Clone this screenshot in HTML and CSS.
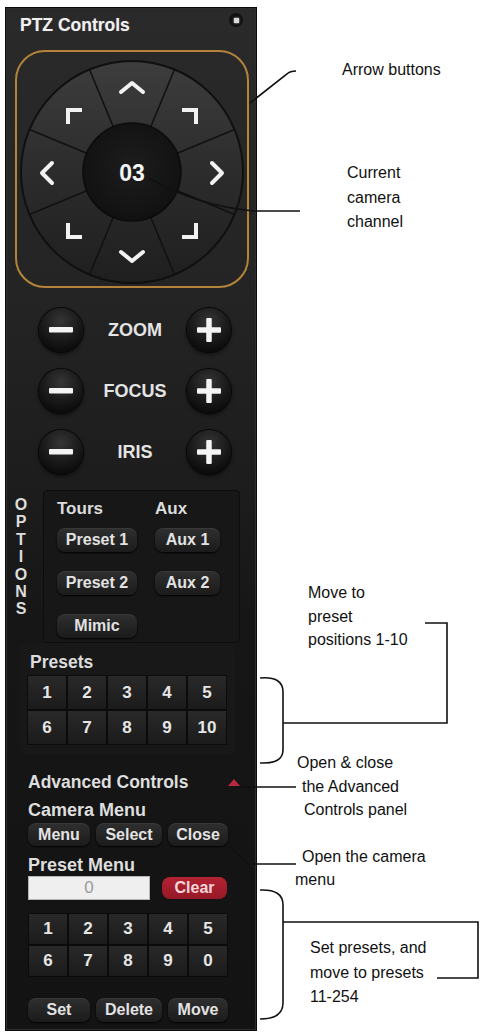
FILE: index.html
```html
<!DOCTYPE html>
<html>
<head>
<meta charset="utf-8">
<link rel="stylesheet" href="styles.css">
</head>
<body>
<div class="page">
  <div class="panel">
    <div class="hdr">
      <span class="title">PTZ Controls</span>
      <span class="xbtn"><span class="xdot"></span></span>
    </div>

    <div class="joy">
      <svg width="230" height="234" viewBox="0 0 230 234">
        <defs>
          <linearGradient id="ring" x1="0" y1="0" x2="0" y2="1">
            <stop offset="0" stop-color="#3d3d3d"/>
            <stop offset="0.5" stop-color="#2c2c2c"/>
            <stop offset="1" stop-color="#1f1f1f"/>
          </linearGradient>
          <radialGradient id="hub" cx="0.5" cy="0.45" r="0.55">
            <stop offset="0" stop-color="#1d1d1d"/>
            <stop offset="1" stop-color="#111"/>
          </radialGradient>
        </defs>
        <circle cx="115" cy="120" r="111" fill="url(#ring)" stroke="#101010" stroke-width="2"/>
        <g stroke="#111" stroke-width="1.6">
          <line x1="133.75" y1="74.73" x2="157.48" y2="17.45"/>
          <line x1="160.27" y1="101.25" x2="217.55" y2="77.52"/>
          <line x1="160.27" y1="138.75" x2="217.55" y2="162.48"/>
          <line x1="133.75" y1="165.27" x2="157.48" y2="222.55"/>
          <line x1="96.25" y1="165.27" x2="72.52" y2="222.55"/>
          <line x1="69.73" y1="138.75" x2="12.45" y2="162.48"/>
          <line x1="69.73" y1="101.25" x2="12.45" y2="77.52"/>
          <line x1="96.25" y1="74.73" x2="72.52" y2="17.45"/>
        </g>
        <circle cx="115" cy="120" r="49" fill="url(#hub)" stroke="#0c0c0c" stroke-width="1.5"/>
        <g fill="none" stroke="#f2f2f2" stroke-width="4" stroke-linecap="round" stroke-linejoin="round">
          <polyline points="104,40 115,31 126,40"/>
          <polyline points="104,200 115,209 126,200"/>
          <polyline points="35,111 25,121 35,131"/>
          <polyline points="195,111 205,121 195,131"/>
        </g>
        <g fill="none" stroke="#f2f2f2" stroke-width="4" stroke-linecap="square">
          <polyline points="51,70 51,58 63,58"/>
          <polyline points="167,58 179,58 179,70"/>
          <polyline points="51,173 51,185 63,185"/>
          <polyline points="167,185 179,185 179,173"/>
        </g>
        <text x="115" y="129" text-anchor="middle" class="chan">03</text>
      </svg>
    </div>

    <div class="lens">
      <div class="lrow">
        <span class="rnd"><svg width="24" height="6"><rect width="24" height="5.5" y="0" rx="1" fill="#f4f4f4"/></svg></span>
        <span class="llabel">ZOOM</span>
        <span class="rnd"><svg width="24" height="24"><rect x="0" y="9.25" width="24" height="5.5" rx="1" fill="#f4f4f4"/><rect x="9.25" y="0" width="5.5" height="24" rx="1" fill="#f4f4f4"/></svg></span>
      </div>
      <div class="lrow">
        <span class="rnd"><svg width="24" height="6"><rect width="24" height="5.5" y="0" rx="1" fill="#f4f4f4"/></svg></span>
        <span class="llabel">FOCUS</span>
        <span class="rnd"><svg width="24" height="24"><rect x="0" y="9.25" width="24" height="5.5" rx="1" fill="#f4f4f4"/><rect x="9.25" y="0" width="5.5" height="24" rx="1" fill="#f4f4f4"/></svg></span>
      </div>
      <div class="lrow">
        <span class="rnd"><svg width="24" height="6"><rect width="24" height="5.5" y="0" rx="1" fill="#f4f4f4"/></svg></span>
        <span class="llabel">IRIS</span>
        <span class="rnd"><svg width="24" height="24"><rect x="0" y="9.25" width="24" height="5.5" rx="1" fill="#f4f4f4"/><rect x="9.25" y="0" width="5.5" height="24" rx="1" fill="#f4f4f4"/></svg></span>
      </div>
    </div>

    <div class="options">
      <div class="otab">
        <span>O</span><span>P</span><span>T</span><span>I</span><span>O</span><span>N</span><span>S</span>
      </div>
      <div class="obox">
        <div class="ocol ocol1">
          <span class="olabel">Tours</span>
          <span class="btn">Preset 1</span>
          <span class="btn">Preset 2</span>
          <span class="btn">Mimic</span>
        </div>
        <div class="ocol ocol2">
          <span class="olabel">Aux</span>
          <span class="btn">Aux 1</span>
          <span class="btn">Aux 2</span>
        </div>
      </div>
    </div>

    <div class="presets">
      <div class="plabel">Presets</div>
      <div class="keys keys1">
        <span>1</span><span>2</span><span>3</span><span>4</span><span>5</span>
        <span>6</span><span>7</span><span>8</span><span>9</span><span>10</span>
      </div>
    </div>

    <div class="adv">
      <div class="advhdr"><span>Advanced Controls</span><span class="tri"></span></div>
      <div class="sublabel">Camera Menu</div>
      <div class="row3">
        <span class="btn">Menu</span><span class="btn">Select</span><span class="btn">Close</span>
      </div>
      <div class="sublabel sub2">Preset Menu</div>
      <div class="inrow">
        <span class="input">0</span>
        <span class="clear">Clear</span>
      </div>
      <div class="keys keys2">
        <span>1</span><span>2</span><span>3</span><span>4</span><span>5</span>
        <span>6</span><span>7</span><span>8</span><span>9</span><span>0</span>
      </div>
      <div class="row3 row3b">
        <span class="btn">Set</span><span class="btn">Delete</span><span class="btn">Move</span>
      </div>
    </div>
  </div>

  <svg class="wires" width="482" height="1034" viewBox="0 0 482 1034">
    <g fill="none" stroke="#111" stroke-width="1.6">
      <path d="M250 103 L287 74 Q290 71 296 71"/>
      <path d="M149 178 Q195 205 253 211 L300 211"/>
      <path d="M260 678 Q283 676 283 692 L283 750 Q283 764 260 763"/>
      <path d="M283 723 H447 V623 H425"/>
      <path d="M236 787 H296"/>
      <path d="M229 846 L248 864 H296"/>
      <path d="M260 890 Q283 889 283 905 L283 1003 Q283 1019 260 1019"/>
      <path d="M283 922 H478 V978 H437"/>
    </g>
  </svg>

  <div class="note n1">Arrow buttons</div>
  <div class="note n2">Current<br>camera<br>channel</div>
  <div class="note n3">Move to<br>preset<br>positions 1-10</div>
  <div class="note n4">Open &amp; close<br><span class="ind1">the Advanced</span><br><span class="ind2">Controls panel</span></div>
  <div class="note n5"><span class="ind1">Open the camera</span><br>menu</div>
  <div class="note n6">Set presets, and<br>move to presets<br>11-254</div>
</div>
</body>
</html>
```

FILE: styles.css
```css
html, body {
  margin: 0;
  background: #fff;
}
body {
  font-family: "Liberation Sans", Arial, sans-serif;
}
.page {
  position: relative;
  width: 482px;
  height: 1034px;
  box-sizing: border-box;
  padding: 7px 0 0 5px;
}
.panel {
  width: 252px;
  height: 1024px;
  box-sizing: border-box;
  border: 1px solid #0a0a0a;
  box-shadow: inset 0 0 0 1px #2e2e2e;
  background: linear-gradient(#2a2a2a 0%, #242424 28%, #1d1d1d 46%, #161616 60%, #131313 100%);
  display: flex;
  flex-direction: column;
  font-weight: bold;
  color: #e6e6e6;
}

/* header */
.hdr {
  height: 42px;
  box-sizing: border-box;
  padding: 7px 13px 0 14px;
  display: flex;
  justify-content: space-between;
  align-items: flex-start;
}
.title {
  font-size: 17.5px;
  line-height: 20px;
  color: #f0f0f0;
  text-shadow: 0 0 1px rgba(255,255,255,.3);
}
.xbtn {
  width: 14px;
  height: 14px;
  margin-top: -2px;
  border-radius: 50%;
  background: #111;
  display: flex;
  align-items: center;
  justify-content: center;
}
.xdot {
  width: 5px;
  height: 5px;
  background: #d8d8d8;
  box-shadow: 0 0 2px #fff;
}

/* joystick */
.joy {
  margin-left: 9px;
  width: 234px;
  height: 238px;
  box-sizing: border-box;
  border: 2px solid #b3843a;
  border-radius: 30px;
}
.joy svg {
  display: block;
}
.chan {
  font-family: "Liberation Sans", Arial, sans-serif;
  font-weight: bold;
  font-size: 23px;
  fill: #f4f4f4;
}

/* zoom / focus / iris */
.lens {
  margin: 20px 25px 0 33px;
  display: flex;
  flex-direction: column;
  gap: 17px;
}
.lrow {
  height: 44px;
  display: flex;
  align-items: center;
  justify-content: space-between;
}
.llabel {
  font-size: 18px;
  color: #e4e4e4;
}
.rnd {
  width: 44px;
  height: 44px;
  border-radius: 50%;
  background: radial-gradient(circle at 50% 30%, #363636 0%, #1c1c1c 45%, #0b0b0b 80%);
  box-shadow: 0 0 0 1px #080808, 0 2px 4px rgba(0,0,0,.7);
  display: flex;
  align-items: center;
  justify-content: center;
}
.rnd svg {
  display: block;
}

/* options */
.options {
  margin: 16px 16px 0 7px;
  height: 153px;
  display: flex;
}
.otab {
  width: 30px;
  box-sizing: border-box;
  padding: 6px 14px 0 0;
  display: flex;
  flex-direction: column;
  align-items: center;
  font-size: 16px;
  line-height: 17.4px;
  color: #dcdcdc;
}
.obox {
  flex: 1;
  background: #171717;
  border: 1px solid #0d0d0d;
  border-radius: 4px;
  padding: 8px 0 0 13px;
  display: flex;
  gap: 18px;
}
.ocol {
  display: flex;
  flex-direction: column;
  gap: 19px;
}
.ocol1 { width: 80px; }
.ocol2 { width: 65px; }
.olabel {
  font-size: 17px;
  line-height: 20px;
  margin-bottom: -10px;
  color: #dcdcdc;
}
.btn {
  height: 24px;
  border-radius: 8px;
  background: linear-gradient(#2f2f2f, #1b1b1b);
  box-shadow: 0 1px 2px #000, inset 0 1px 0 rgba(255,255,255,.05);
  display: flex;
  align-items: center;
  justify-content: center;
  font-size: 16px;
  color: #e2e2e2;
}

/* presets */
.presets {
  margin: 0 21px 0 14px;
  height: 112px;
  box-sizing: border-box;
  padding: 10px 0 0 7px;
  background: #181818;
  border-radius: 6px;
}
.plabel {
  font-size: 17.5px;
  line-height: 18px;
  padding-left: 3px;
  margin-bottom: 4px;
  color: #dcdcdc;
}
.keys {
  display: grid;
  grid-template-columns: repeat(5, 40px);
}
.keys span {
  box-sizing: border-box;
  border: 1px solid #0b0b0b;
  background: linear-gradient(#292929, #1b1b1b);
  display: flex;
  align-items: center;
  justify-content: center;
  font-size: 17px;
  color: #e6e6e6;
}
.keys1 { grid-auto-rows: 35px; }
.keys2 { grid-auto-rows: 32px; margin-top: 13px; }

/* advanced */
.adv {
  padding: 19px 16px 0 22px;
}
.advhdr {
  display: flex;
  justify-content: space-between;
  align-items: center;
  font-size: 17.5px;
  line-height: 16px;
  color: #dedede;
}
.tri {
  width: 0;
  height: 0;
  border-left: 6px solid transparent;
  border-right: 6px solid transparent;
  border-bottom: 7px solid #b8283f;
}
.sublabel {
  margin-top: 12px;
  font-size: 18px;
  line-height: 16px;
  color: #dedede;
}
.sub2 { margin-top: 11px; }
.row3 {
  margin-top: 5px;
  display: grid;
  grid-template-columns: 62px 66px 60px;
  column-gap: 6px;
}
.row3 .btn { height: 23px; }
.row3b { margin-top: 21px; }
.row3b .btn { height: 24px; }
.inrow {
  margin-top: 3px;
  display: flex;
  align-items: center;
  gap: 12px;
}
.input {
  width: 122px;
  height: 24px;
  box-sizing: border-box;
  background: #efefef;
  border: 1px solid #b5b5b5;
  display: flex;
  align-items: center;
  justify-content: center;
  font-weight: normal;
  font-size: 17px;
  color: #9a9a9a;
}
.clear {
  width: 65px;
  height: 22px;
  border-radius: 8px;
  background: linear-gradient(#b32334, #961826);
  display: flex;
  align-items: center;
  justify-content: center;
  font-size: 16px;
  color: #f2d6da;
}

/* callouts */
.wires {
  position: absolute;
  left: 0;
  top: 0;
  pointer-events: none;
}
.note {
  position: absolute;
  font-size: 16px;
  line-height: 24px;
  color: #111;
  white-space: nowrap;
}
.n1 { left: 342px; top: 58px; }
.n2 { left: 347px; top: 161px; line-height: 24.5px; }
.n3 { left: 308px; top: 581px; line-height: 23.5px; }
.n4 { left: 297px; top: 751px; line-height: 23.5px; }
.n4 .ind1 { padding-left: 5px; }
.n4 .ind2 { padding-left: 7px; }
.n5 { left: 295px; top: 845px; line-height: 23px; }
.n5 .ind1 { padding-left: 7px; }
.n6 { left: 310px; top: 936px; line-height: 24.5px; }
```
